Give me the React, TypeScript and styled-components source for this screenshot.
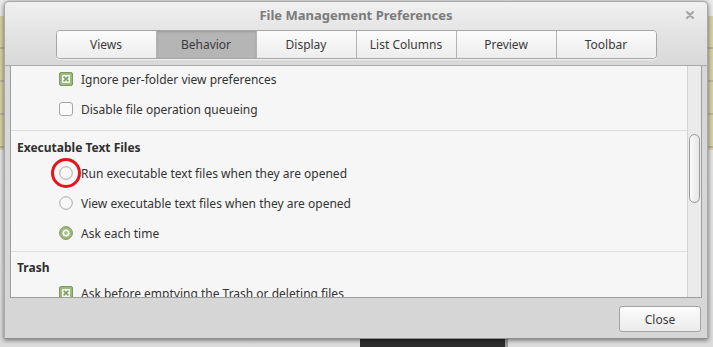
import React from 'react';
import styled, { createGlobalStyle } from 'styled-components';

const GlobalStyle = createGlobalStyle`
  html, body {
    margin: 0;
    padding: 0;
    background: #cfcfcf;
  }
  * {
    box-sizing: border-box;
  }
`;

const Screen = styled.div`
  position: relative;
  width: 713px;
  height: 347px;
  overflow: hidden;
  font-family: 'Noto Sans', 'DejaVu Sans', sans-serif;
  background:
    linear-gradient(to right, transparent 360px, #2e2e2e 360px, #2e2e2e 505px, #9a9a9a 505px, #9a9a9a 508px, transparent 508px) 0 338px / 713px 9px no-repeat,
    repeating-linear-gradient(to bottom, #d7d3a6 0, #d7d3a6 31px, #b9b69a 31px, #b9b69a 33px) 0 16px / 713px 134px no-repeat,
    linear-gradient(#ececec, #dcdcdc);
`;

const Dialog = styled.div`
  position: absolute;
  left: 4px;
  top: 1px;
  width: 704px;
  height: 338px;
  display: flex;
  flex-direction: column;
  border-radius: 5px 5px 0 0;
  border: 1px solid #a9a9a9;
  border-bottom-color: #8f8f8f;
  background: linear-gradient(to bottom, #f0f0f0 0, #e4e4e4 30px, #d8d8d8 64px, #d6d6d6 100%);
  box-shadow: 0 1px 5px rgba(0, 0, 0, 0.55);
`;

const TitleBar = styled.div`
  position: relative;
  height: 28px;
  display: flex;
  align-items: center;
  justify-content: center;
  padding-bottom: 2px;
`;

const Title = styled.span`
  font-size: 13px;
  font-weight: bold;
  color: #7b7b7b;
`;

const CloseX = styled.span`
  position: absolute;
  right: 13px;
  top: 9px;
  width: 8px;
  height: 8px;
  display: flex;
`;

const TabRow = styled.div`
  display: flex;
  justify-content: center;
  height: 29px;
  margin-bottom: 6px;
`;

const TabStrip = styled.div`
  display: flex;
  border: 1px solid #a6a6a6;
  border-radius: 4px;
  overflow: hidden;
  box-shadow: 0 1px 0 rgba(255, 255, 255, 0.6);
`;

const Tab = styled.div<{ $active?: boolean }>`
  width: 100px;
  display: flex;
  align-items: center;
  justify-content: center;
  font-size: 12px;
  color: #3a3a3a;
  border-left: 1px solid #b3b3b3;
  &:first-child {
    border-left: none;
    width: 99px;
  }
  background: ${(p) =>
    p.$active ? '#b5b5b5' : 'linear-gradient(to bottom, #fbfbfb, #ededed)'};
  box-shadow: ${(p) => (p.$active ? 'inset 0 1px 2px rgba(0,0,0,0.15)' : 'none')};
`;

const Notebook = styled.div`
  border-top: 1px solid #a9a9a9;
  padding: 0 5px;
`;

const Panel = styled.div`
  height: 232px;
  display: flex;
  border: 1px solid #9d9d9d;
  border-top: none;
  background: #f6f6f6;
`;

const Content = styled.div`
  flex: 1;
  overflow: hidden;
  color: #333;
  font-size: 12px;
`;

const Scrolled = styled.div`
  margin-top: -2px;
`;

const Section = styled.div<{ $pad: number }>`
  padding-bottom: ${(p) => p.$pad}px;
`;

const Separator = styled.div`
  height: 1px;
  background: #dedede;
`;

const Heading = styled.div<{ $top: number }>`
  padding: ${(p) => p.$top}px 0 1px 6px;
  line-height: 18px;
  font-weight: bold;
  color: #2f2f2f;
`;

const Row = styled.div`
  height: 30px;
  display: flex;
  align-items: center;
  padding-left: 48px;
  gap: 8px;
  white-space: nowrap;
`;

const Indicator = styled.span`
  position: relative;
  width: 14px;
  height: 14px;
  display: inline-flex;
  flex: none;
`;

const Highlight = styled.span`
  position: absolute;
  left: -8px;
  top: -8px;
  width: 30px;
  height: 30px;
  border: 3px solid #e5131b;
  border-radius: 50%;
`;

const Trough = styled.div`
  width: 14px;
  border-left: 1px solid #d3d3d3;
  background: #ebebeb;
  padding-left: 1px;
`;

const Thumb = styled.div`
  width: 11px;
  height: 69px;
  margin-top: 68px;
  border: 1px solid #9b9b9b;
  border-radius: 6px;
  background: linear-gradient(to right, #fafafa, #e6e6e6);
`;

const Footer = styled.div`
  flex: 1;
  display: flex;
  justify-content: flex-end;
  align-items: flex-start;
  padding: 8px 6px 0 0;
`;

const Button = styled.button`
  width: 82px;
  height: 26px;
  border: 1px solid #a3a3a3;
  border-radius: 3px;
  background: linear-gradient(to bottom, #fcfcfc, #ebebeb);
  font-family: 'Noto Sans', 'DejaVu Sans', sans-serif;
  font-size: 12px;
  color: #3a3a3a;
  padding: 0;
`;

const Check = ({ checked }: { checked?: boolean }) =>
  checked ? (
    <svg width="14" height="14" viewBox="0 0 14 14">
      <rect x="0.5" y="0.5" width="13" height="13" rx="1.5" fill="#9bb97c" stroke="#7b9a5d" />
      <rect x="3" y="3" width="8" height="8" fill="#f4f8ef" />
      <path d="M4.6 4.6 L9.4 9.4 M9.4 4.6 L4.6 9.4" stroke="#7fa05f" strokeWidth="1.6" />
    </svg>
  ) : (
    <svg width="14" height="14" viewBox="0 0 14 14">
      <rect x="0.5" y="0.5" width="13" height="13" rx="2.5" fill="#fafafa" stroke="#a6a6a6" />
    </svg>
  );

const Radio = ({ checked }: { checked?: boolean }) =>
  checked ? (
    <svg width="14" height="14" viewBox="0 0 14 14">
      <circle cx="7" cy="7" r="6.4" fill="#9bb97c" stroke="#7b9a5d" />
      <circle cx="7" cy="7" r="3.6" fill="#ffffff" />
      <circle cx="7" cy="7" r="2" fill="#a9c28f" />
    </svg>
  ) : (
    <svg width="14" height="14" viewBox="0 0 14 14">
      <circle cx="7" cy="7" r="6.3" fill="#f7f7f7" stroke="#a8a8a8" />
    </svg>
  );

const tabs = ['Views', 'Behavior', 'Display', 'List Columns', 'Preview', 'Toolbar'];

const App: React.FC = () => {
  return (
    <Screen>
      <GlobalStyle />
      <Dialog>
        <TitleBar>
          <Title>File Management Preferences</Title>
          <CloseX>
            <svg width="8" height="8" viewBox="0 0 8 8">
              <path d="M1 1 L7 7 M7 1 L1 7" stroke="#a3a3a3" strokeWidth="2" strokeLinecap="round" />
            </svg>
          </CloseX>
        </TitleBar>
        <TabRow>
          <TabStrip>
            {tabs.map((t) => (
              <Tab key={t} $active={t === 'Behavior'}>
                {t}
              </Tab>
            ))}
          </TabStrip>
        </TabRow>
        <Notebook>
          <Panel>
            <Content>
              <Scrolled>
                <Section $pad={6}>
                  <Row>
                    <Indicator>
                      <Check checked />
                    </Indicator>
                    Ignore per-folder view preferences
                  </Row>
                  <Row>
                    <Indicator>
                      <Check />
                    </Indicator>
                    Disable file operation queueing
                  </Row>
                </Section>
                <Separator />
                <Section $pad={3}>
                  <Heading $top={8}>Executable Text Files</Heading>
                  <Row>
                    <Indicator>
                      <Radio />
                      <Highlight />
                    </Indicator>
                    Run executable text files when they are opened
                  </Row>
                  <Row>
                    <Indicator>
                      <Radio />
                    </Indicator>
                    View executable text files when they are opened
                  </Row>
                  <Row>
                    <Indicator>
                      <Radio checked />
                    </Indicator>
                    Ask each time
                  </Row>
                </Section>
                <Separator />
                <Section $pad={0}>
                  <Heading $top={7}>Trash</Heading>
                  <Row>
                    <Indicator>
                      <Check checked />
                    </Indicator>
                    Ask before emptying the Trash or deleting files
                  </Row>
                </Section>
              </Scrolled>
            </Content>
            <Trough>
              <Thumb />
            </Trough>
          </Panel>
        </Notebook>
        <Footer>
          <Button>Close</Button>
        </Footer>
      </Dialog>
    </Screen>
  );
};

export default App;
